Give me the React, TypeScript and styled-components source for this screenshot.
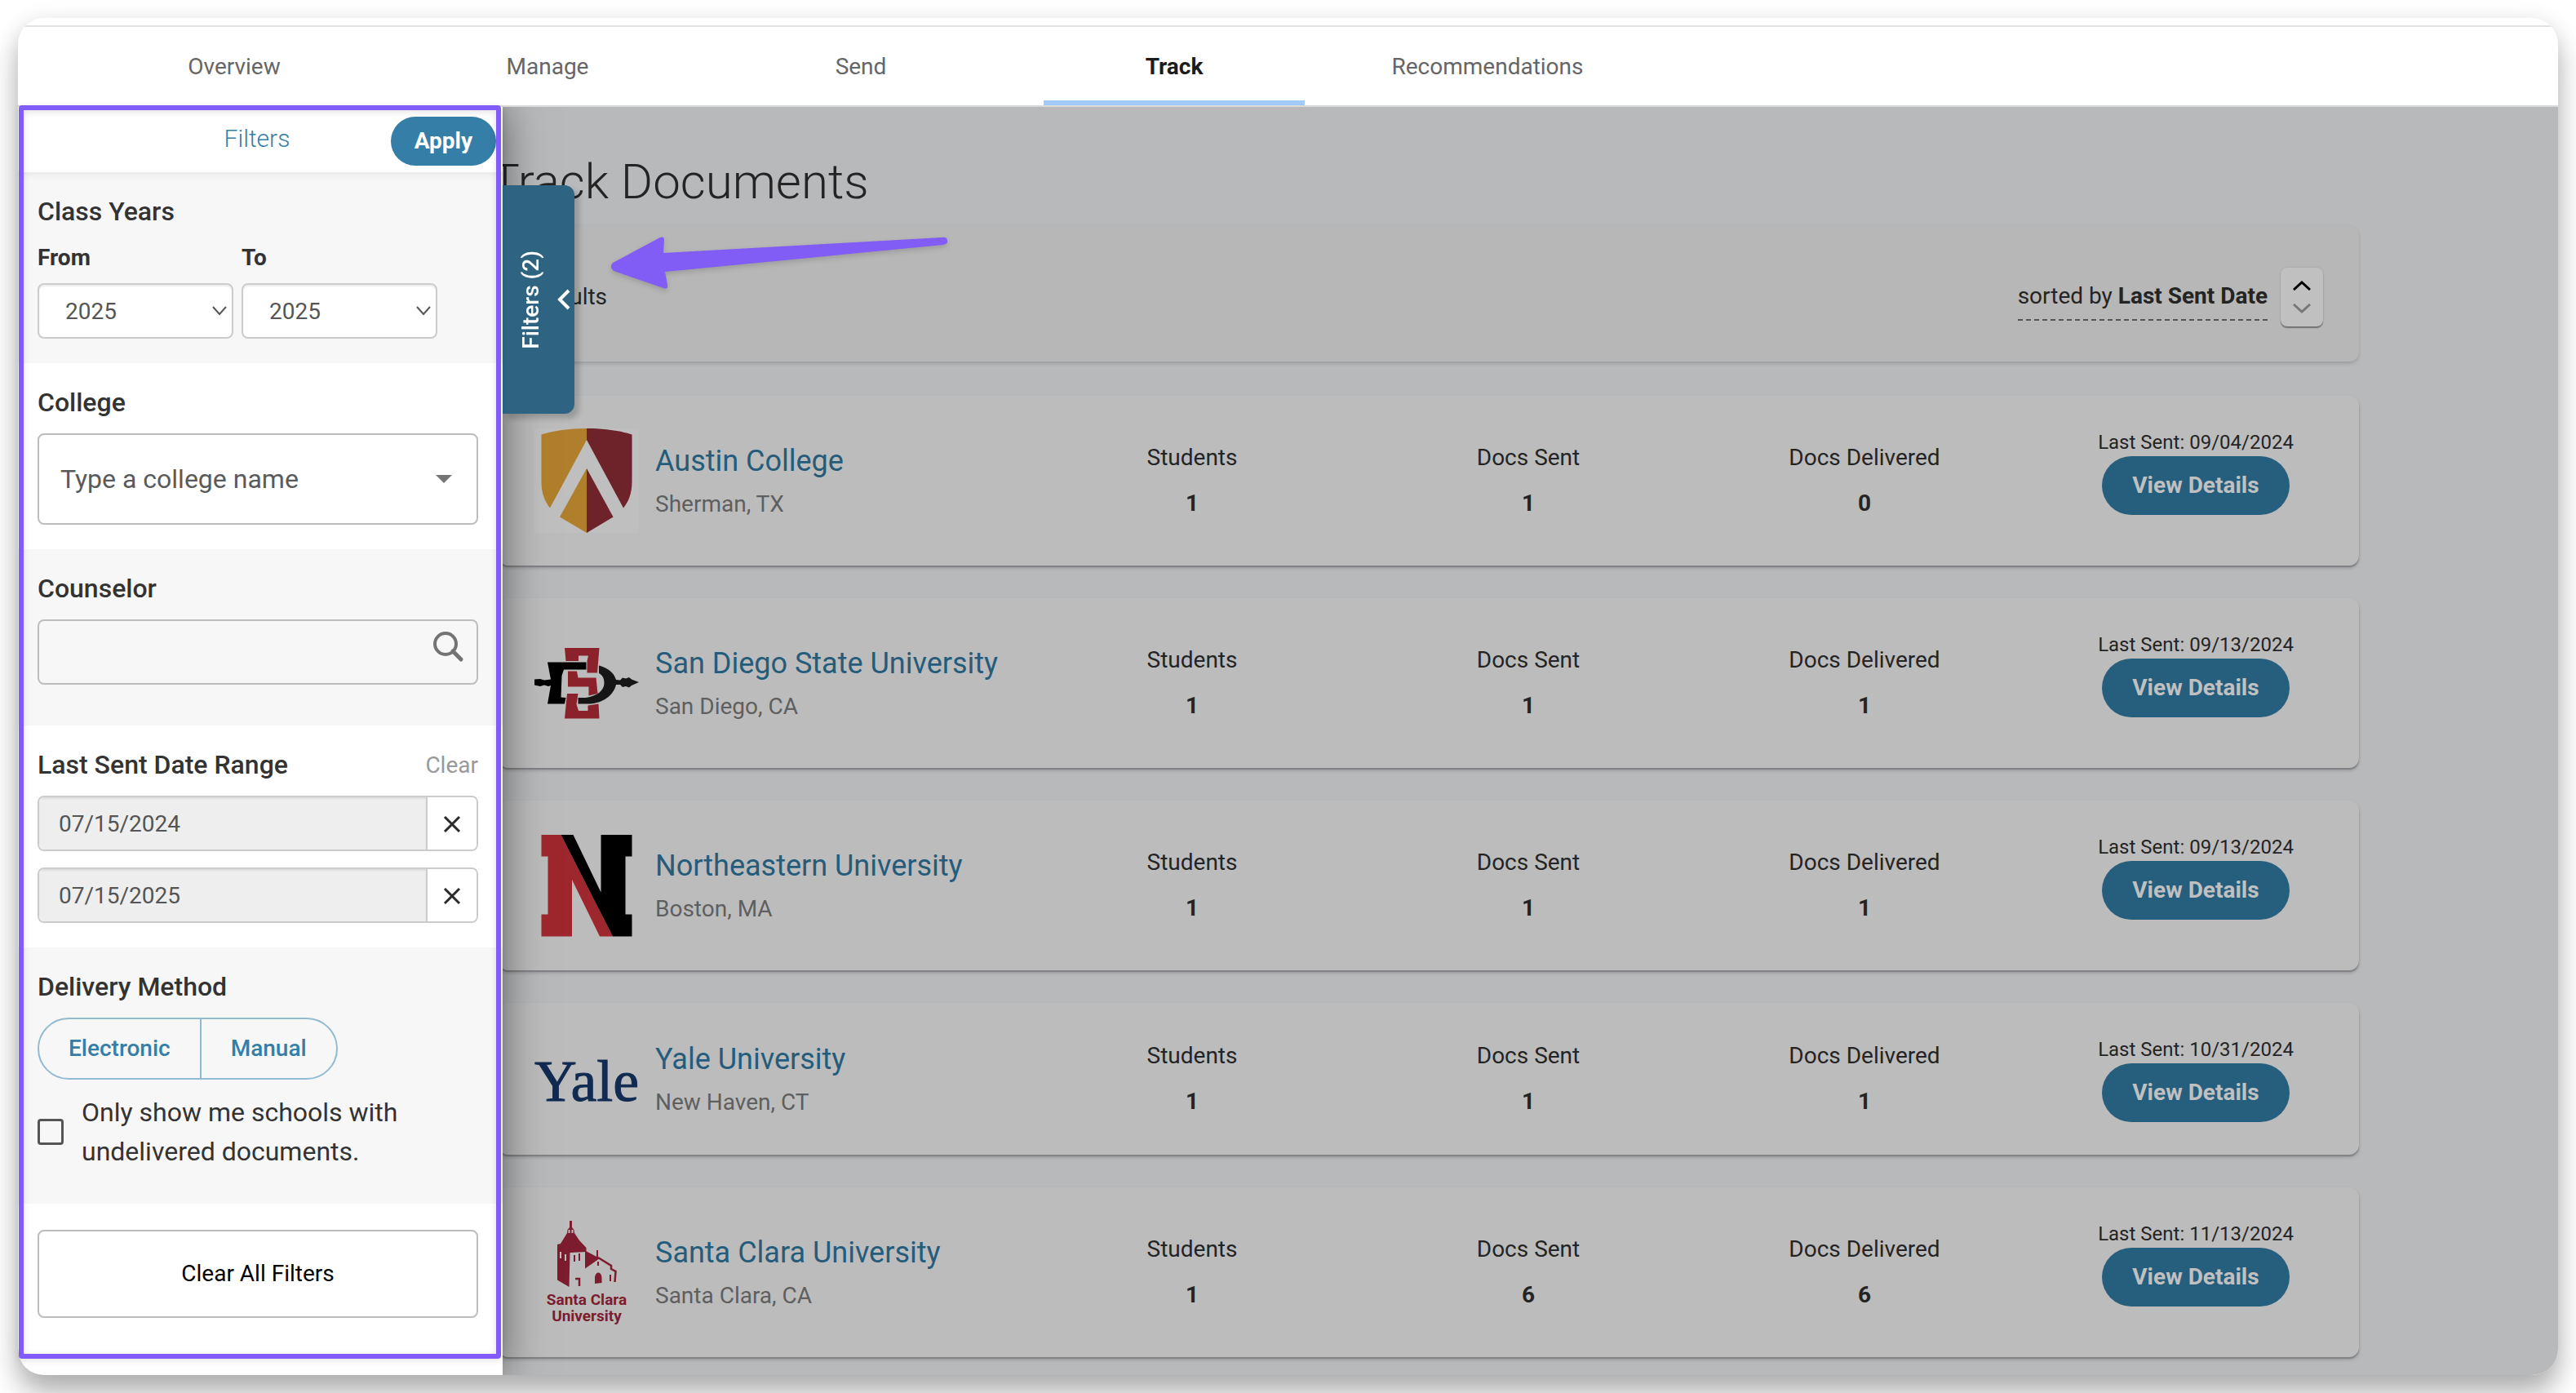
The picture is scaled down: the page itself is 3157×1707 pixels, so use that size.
import React, { useState } from "react";
import styled, { createGlobalStyle, css } from "styled-components";

const GlobalStyle = createGlobalStyle`
  *, *::before, *::after { box-sizing: border-box; }
  body {
    margin: 0;
    background: #ffffff;
    color: #242424;
    font-family: Roboto, "Liberation Sans", sans-serif;
    font-size: 28px;
    line-height: 32px;
  }
  button, input, select { font: inherit; margin: 0; }
  h1, h2, h3, p, dl, dd { margin: 0; font-weight: inherit; }
`;

/* ---------- page frame ---------- */

const Page = styled.div`
  position: relative;
  padding: 22px;
  overflow: hidden;
`;

const Frame = styled.div`
  border-radius: 32px;
  overflow: hidden;
  background: #ffffff;
  box-shadow: 0 22px 34px rgba(0, 0, 0, 0.3), 0 0 30px rgba(0, 0, 0, 0.06);
`;

const Nav = styled.nav`
  display: flex;
  margin-top: 9px;
  padding-left: 73px;
  border-top: 2px solid #e3e3e3;
  border-bottom: 2px solid #dadada;
`;

const NavLink = styled.a<{ $active?: boolean }>`
  flex: 0 1 320px;
  height: 96px;
  margin: 0 32px;
  display: flex;
  align-items: center;
  justify-content: center;
  padding-top: 8px;
  border-bottom: 6px solid ${(p) => (p.$active ? "#a2caf8" : "transparent")};
  color: ${(p) => (p.$active ? "#1c1c1c" : "#666666")};
  font-weight: ${(p) => (p.$active ? 700 : 400)};
  text-decoration: none;
`;

const Body = styled.div`
  position: relative;
  display: flex;
`;

/* ---------- results ---------- */

const Main = styled.main`
  flex: 1;
  min-width: 0;
  padding: 56px 244px 22px 589px;
  background: #b8b9bb;
`;

const Title = styled.h1`
  font-size: 60px;
  line-height: 72px;
  font-weight: 300;
  margin: 0 0 18px -10px;
  color: #242424;
`;

const ResultsBar = styled.div`
  display: flex;
  align-items: center;
  justify-content: space-between;
  padding: 51px 44px 43px 26px;
  margin-bottom: 42px;
  border-radius: 12px;
  background: #b7b7b7;
  box-shadow: 0 3px 4px rgba(0, 0, 0, 0.12), 0 0 4px rgba(0, 0, 0, 0.04);
`;

const SortGroup = styled.div`
  display: flex;
  align-items: center;
  gap: 16px;
`;

const SortLink = styled.a`
  color: inherit;
  line-height: 48px;
  padding: 4px 0;
  border-bottom: 2px dashed #555555;
  text-decoration: none;

  b {
    font-weight: 700;
  }
`;

const SortButton = styled.button`
  display: flex;
  flex-direction: column;
  align-items: center;
  justify-content: center;
  gap: 16px;
  width: 52px;
  height: 72px;
  padding: 0;
  border: 0;
  border-radius: 8px;
  background: #c0c0c0;
  box-shadow: 0 2px 1px rgba(0, 0, 0, 0.35), 0 0 3px rgba(0, 0, 0, 0.12);
`;

const CardList = styled.ul`
  display: flex;
  flex-direction: column;
  gap: 40px;
  margin: 0;
  padding: 0;
  list-style: none;
`;

const Card = styled.li`
  display: grid;
  grid-template-columns: 600fr 412fr 412fr 412fr 400fr;
  align-items: center;
  padding: 40px 0 40px 44px;
  border-radius: 12px;
  background: #bcbcbc;
  box-shadow: 0 2px 1px #808284, 0 3px 4px rgba(0, 0, 0, 0.2);
`;

const School = styled.div`
  display: flex;
  align-items: center;
  gap: 20px;
`;

const LogoBox = styled.svg`
  display: block;
  flex: none;
  width: 128px;
  overflow: visible;
`;

const SchoolName = styled.a`
  display: block;
  font-size: 36px;
  line-height: 58px;
  color: #265c7b;
  text-decoration: none;
`;

const SchoolPlace = styled.p`
  line-height: 48px;
  color: #5f5f5f;
`;

const Stat = styled.dl`
  display: flex;
  flex-direction: column;
  align-items: center;
  gap: 6px;
  line-height: 50px;

  dd {
    font-weight: 700;
  }
`;

const Actions = styled.div`
  align-self: start;
  display: flex;
  flex-direction: column;
  align-items: center;
`;

const LastSent = styled.p`
  font-size: 24px;
  line-height: 34px;
`;

const PillButton = styled.button<{ $dimmed?: boolean }>`
  border: 0;
  padding: 0 29px;
  border-radius: 36px;
  font-weight: 700;
  height: 60px;
  background: #357ea8;
  color: #ffffff;
  ${(p) =>
    p.$dimmed &&
    css`
      min-width: 230px;
      height: 72px;
      background: #265e7e;
      color: #c0c0c0;
    `}
`;

/* ---------- filter drawer ---------- */

const Drawer = styled.aside`
  position: absolute;
  top: 0;
  bottom: 0;
  left: 0;
  width: 594px;
  background: #ffffff;
  box-shadow: 0 0 50px rgba(0, 0, 0, 0.5);
  clip-path: inset(0 -100px 0 0);
`;

const DrawerHeader = styled.header`
  position: relative;
  display: grid;
  grid-template-columns: 1fr auto 1fr;
  align-items: center;
  height: 80px;
  padding: 4px 8px 0 0;
  box-shadow: 0 2px 10px rgba(0, 0, 0, 0.08);

  h2 {
    grid-column: 2;
    padding-bottom: 6px;
    font-size: 30px;
    font-weight: 300;
    color: #357ea8;
  }

  button {
    justify-self: end;
  }
`;

const Section = styled.section<{ $shaded?: boolean }>`
  padding: 28px 30px 30px 24px;
  background: ${(p) => (p.$shaded ? "#f7f7f7" : "#ffffff")};
`;

const CounselorSection = styled(Section)`
  padding-bottom: 50px;
`;

const DeliverySection = styled(Section)`
  padding-bottom: 40px;
`;

const FooterSection = styled(Section)`
  padding-top: 32px;
`;

const sectionTitle = css`
  display: block;
  margin-bottom: 18px;
  font-size: 32px;
  line-height: 40px;
  font-weight: 500;
  color: #333333;
`;

const SectionTitle = styled.h3`
  ${sectionTitle}
`;

const SectionLabel = styled.label`
  ${sectionTitle}
`;

const TitleRow = styled.div`
  display: flex;
  justify-content: space-between;
`;

const TextButton = styled.button`
  border: 0;
  padding: 0;
  background: none;
  line-height: 40px;
  height: 42px;
  color: #999999;
`;

const YearRow = styled.div`
  display: flex;
  gap: 10px;
`;

const YearField = styled.div`
  flex: 0 0 240px;

  label {
    display: block;
    line-height: 38px;
    margin-bottom: 12px;
    font-weight: 700;
    color: #333333;
  }
`;

const Control = styled.div`
  position: relative;
`;

const ControlIcon = styled.span<{ $right: number }>`
  position: absolute;
  top: 0;
  bottom: 0;
  right: ${(p) => p.$right}px;
  display: flex;
  align-items: center;
  pointer-events: none;
`;

const field = css`
  display: block;
  width: 100%;
  border: 2px solid #cccccc;
  border-radius: 8px;
  color: #555555;
  outline: 0;
`;

const YearSelect = styled.select`
  ${field}
  appearance: none;
  height: 68px;
  padding: 2px 32px 0;
  background: #ffffff;
  box-shadow: inset 0 2px 2px rgba(0, 0, 0, 0.08);
`;

const CollegeInput = styled.input`
  ${field}
  height: 112px;
  padding: 0 80px 0 26px;
  border-color: #bdbdbd;
  background: #ffffff;
  font-size: 32px;

  &::placeholder {
    color: #5a5a5a;
    opacity: 1;
  }
`;

const CounselorInput = styled.input`
  ${field}
  height: 80px;
  padding: 0 70px 0 26px;
  border-color: #bdbdbd;
  background: transparent;
`;

const SearchButton = styled.button`
  position: absolute;
  top: 12px;
  right: 14px;
  display: flex;
  padding: 0;
  border: 0;
  background: none;
`;

const DateStack = styled.div`
  display: flex;
  flex-direction: column;
  gap: 20px;
`;

const DateGroup = styled.div`
  display: flex;
  height: 68px;
  border: 2px solid #cccccc;
  border-radius: 8px;
  overflow: hidden;

  input {
    flex: 1;
    min-width: 0;
    border: 0;
    outline: 0;
    padding: 2px 24px 0;
    background: #eeeeee;
    color: #555555;
    box-shadow: inset 0 2px 2px rgba(0, 0, 0, 0.08);
  }

  button {
    display: flex;
    align-items: center;
    justify-content: center;
    width: 62px;
    border: 0;
    border-left: 2px solid #cccccc;
    padding: 2px 0 0;
    background: #ffffff;
  }
`;

const Segmented = styled.div`
  display: inline-flex;
  height: 76px;
  border: 2px solid #92bbd3;
  border-radius: 38px;
  overflow: hidden;

  button {
    border: 0;
    padding: 0 36px;
    background: transparent;
    color: #357ea8;
    font-weight: 500;
  }

  button + button {
    border-left: 2px solid #92bbd3;
  }
`;

const CheckRow = styled.label`
  display: flex;
  align-items: center;
  gap: 22px;
  margin-top: 16px;
  font-size: 32px;
  line-height: 48px;
  color: #333333;
`;

const Checkbox = styled.input`
  appearance: none;
  flex: none;
  width: 32px;
  height: 32px;
  border: 3px solid #555555;
  border-radius: 4px;

  &:checked {
    background: #357ea8;
  }
`;

const ClearAll = styled.button`
  ${field}
  height: 108px;
  border-color: #bdbdbd;
  background: #ffffff;
  color: #000000;
`;

const DrawerTab = styled.button`
  position: absolute;
  top: 96px;
  left: 594px;
  display: flex;
  align-items: center;
  justify-content: space-between;
  width: 88px;
  height: 280px;
  padding: 0 5px 0 19px;
  border: 0;
  border-radius: 0 12px 12px 0;
  background: #2e6482;
  color: #ffffff;
  font-weight: 500;
  box-shadow: 6px 6px 6px rgba(0, 0, 0, 0.18);

  span {
    writing-mode: vertical-rl;
    transform: rotate(180deg);
  }
`;

/* ---------- annotations drawn over the page ---------- */

const Highlight = styled.div`
  position: absolute;
  top: 129px;
  left: 23px;
  bottom: 42px;
  width: 591px;
  border: 6px solid #815cf8;
  border-radius: 4px;
  box-shadow: 0 2px 8px rgba(0, 0, 0, 0.12), inset 0 2px 8px rgba(0, 0, 0, 0.12);
  pointer-events: none;
`;

const Arrow = styled.svg`
  position: absolute;
  top: 280px;
  left: 740px;
  pointer-events: none;
  filter: drop-shadow(0 3px 3px rgba(0, 0, 0, 0.15));
`;

/* ---------- icons and logos ---------- */

type StrokeProps = {
  d: string;
  width: number;
  height: number;
  color: string;
  weight?: number;
};

const Stroke = ({ d, width, height, color, weight = 3 }: StrokeProps) => (
  <svg width={width} height={height} viewBox={`0 0 ${width} ${height}`} fill="none" aria-hidden="true">
    <path d={d} stroke={color} strokeWidth={weight} />
  </svg>
);

const CrossIcon = () => (
  <Stroke d="M2 2 L20 20 M20 2 L2 20" width={22} height={22} color="#2a2a2a" />
);

const SearchIcon = () => (
  <svg width="44" height="44" viewBox="0 0 44 44" fill="none" stroke="#737373" aria-hidden="true">
    <circle cx="18" cy="18" r="13" strokeWidth="4" />
    <path d="M27 27 L37 37" strokeWidth="5" strokeLinecap="round" />
  </svg>
);

const AustinLogo = () => (
  <LogoBox viewBox="0 0 128 128" aria-hidden="true">
    <rect width="128" height="128" fill="#bfbfbf" />
    <path d="M64 0 C42 0 22 3 8.5 7.5 V65 C8.5 80 13 90 19 97.500 L64 14 Z" fill="#b07f2b" />
    <path d="M64 0 C86 0 106 3 119.500 7.500 V65 C119.500 80 115 90 109 97.500 L64 14 Z" fill="#6e222a" />
    <path d="M64 49 L31 108.500 L64 128 Z" fill="#b07f2b" />
    <path d="M64 49 L96.500 108.500 L64 128 Z" fill="#6e222a" />
  </LogoBox>
);

const SanDiegoLogo = () => (
  <LogoBox viewBox="0 0 128 87" aria-hidden="true">
    <g fill="#8b212b">
      <path d="M37 0 H79.500 L77 30.500 H64.500 V16 L66 9.500 H54 V16 H38.500 Z" />
      <path d="M41 28.500 H52 L53.500 36.500 H75.500 L77.500 56 L66.500 58.500 V47.500 H41 Z" />
      <path d="M40 56 H53.500 L51.500 69 L54 77 H65.500 V70.500 L78.500 68.500 L79.500 86.500 H37 Z" />
    </g>
    <path d="M16 17.500 H63.500 V26.500 H36 L33.500 34 L32.500 60.500 L38.500 61 L37 68.500 H16 L20 46 L17 47 L12 45.500 L7 47 L0 45.500 V38.500 L7 38 L12 39.500 L20 38.500 Z" fill="#000000" />
    <path d="M79 21.500 C92 25 98 32 100 39 L105 39.500 L108 36.500 L112 37.500 L116 36 L119 38.500 L128 42 L119 46 L116 48.500 L112 47 L108 48 L105 45 L100 45 C97 58 84 67.500 68 68.500 H53.500 V61 H63 C77 59 85.500 52 85.500 43 C85.500 37 83 33 79 31 Z" fill="#161616" />
  </LogoBox>
);

const NortheasternLogo = () => (
  <LogoBox viewBox="0 0 128 128" aria-hidden="true">
    <path d="M8.500 2 H32.500 L96 126.500 H80 L46 57 V126.500 H8.500 V99.500 H16.500 V28.500 H8.500 Z" fill="#9e272e" />
    <path d="M32.500 2 H47.500 L81.500 72.500 V2 H119.500 V28.500 H111.500 V99.500 H119.500 V126.500 H96 Z" fill="#000000" />
  </LogoBox>
);

const YaleLogo = () => (
  <LogoBox viewBox="-2 -10 132 76" aria-hidden="true">
    <text
      x="64"
      y="56"
      textAnchor="middle"
      fontFamily="'Liberation Serif', serif"
      fontSize="74"
      fill="#102a52"
      stroke="#102a52"
      strokeWidth="1"
    >
      Yale
    </text>
  </LogoBox>
);

const SantaClaraLogo = () => (
  <LogoBox viewBox="0 0 128 128" aria-hidden="true" fill="#7c1c2e">
    <path d="M43 1 H46 V9 L48.500 12 L49 16 L55 25 L63.500 34 V39 L43.500 40 L42.500 82 L28 73.500 V30 L32 29 L40 16 L40.500 12 L43 9 Z" />
    <path d="M42.500 12 V16 M46.500 12 V16 M32 39 V47 M38 42 V50" stroke="#bcbcbc" strokeWidth="2" />
    <path d="M49 43 V51 M55 41 V50 M93 67 V75 M78 51 V56 M77 37 V46" stroke="#7c1c2e" strokeWidth="2" />
    <path d="M62 37.500 L80 47 L62 59.500 Z" />
    <path d="M78 46 L94 56 V60 L99.500 63 L98.500 76 M50 72 H55 V81" fill="none" stroke="#7c1c2e" strokeWidth="2.500" />
    <path d="M74 78 V70 Q75 64 79 64.500 Q82.500 66 82.500 71 V77 Z" />
    <g fontFamily="Roboto, sans-serif" fontWeight="700" fontSize="19" textAnchor="middle">
      <text x="64" y="104">Santa Clara</text>
      <text x="64" y="124">University</text>
    </g>
  </LogoBox>
);

/* ---------- data ---------- */

const TABS = ["Overview", "Manage", "Send", "Track", "Recommendations"];

const SCHOOLS = [
  { name: "Austin College", place: "Sherman, TX", stats: [1, 1, 0], sent: "09/04/2024", Logo: AustinLogo },
  { name: "San Diego State University", place: "San Diego, CA", stats: [1, 1, 1], sent: "09/13/2024", Logo: SanDiegoLogo, tall: true },
  { name: "Northeastern University", place: "Boston, MA", stats: [1, 1, 1], sent: "09/13/2024", Logo: NortheasternLogo },
  { name: "Yale University", place: "New Haven, CT", stats: [1, 1, 1], sent: "10/31/2024", Logo: YaleLogo },
  { name: "Santa Clara University", place: "Santa Clara, CA", stats: [1, 6, 6], sent: "11/13/2024", Logo: SantaClaraLogo },
];

const STAT_LABELS = ["Students", "Docs Sent", "Docs Delivered"];

const LogoSlot = styled.div<{ $tall?: boolean }>`
  display: flex;
  align-items: center;
  min-height: ${(p) => (p.$tall ? 128 : 0)}px;
`;

const YearPicker = ({ id, label }: { id: string; label: string }) => (
  <YearField>
    <label htmlFor={id}>{label}</label>
    <Control>
      <YearSelect id={id} defaultValue="2025">
        <option>2024</option>
        <option>2025</option>
        <option>2026</option>
      </YearSelect>
      <ControlIcon $right={8}>
        <Stroke d="M1 1 L9 10 L17 1" width={18} height={12} color="#555555" weight={2} />
      </ControlIcon>
    </Control>
  </YearField>
);

export default function App() {
  const [dates, setDates] = useState(["07/15/2024", "07/15/2025"]);
  const clearDate = (index: number) =>
    setDates(dates.map((date, i) => (i === index ? "" : date)));

  return (
    <Page>
      <GlobalStyle />
      <Frame>
        <Nav>
          {TABS.map((tab) => (
            <NavLink key={tab} href="#" $active={tab === "Track"}>
              {tab}
            </NavLink>
          ))}
        </Nav>
        <Body>
          <Main>
            <Title>Track Documents</Title>
            <ResultsBar>
              <span>5 results</span>
              <SortGroup>
                <SortLink href="#">
                  sorted by <b>Last Sent Date</b>
                </SortLink>
                <SortButton aria-label="Change sort direction">
                  <Stroke d="M1 11 L11 2 L21 11" width={22} height={12} color="#000000" />
                  <Stroke d="M1 1 L11 10 L21 1" width={22} height={12} color="#777777" />
                </SortButton>
              </SortGroup>
            </ResultsBar>
            <CardList>
              {SCHOOLS.map(({ name, place, stats, sent, Logo, tall }) => (
                <Card key={name}>
                  <School>
                    <LogoSlot $tall={tall}>
                      <Logo />
                    </LogoSlot>
                    <div>
                      <SchoolName href="#">{name}</SchoolName>
                      <SchoolPlace>{place}</SchoolPlace>
                    </div>
                  </School>
                  {STAT_LABELS.map((label, i) => (
                    <Stat key={label}>
                      <dt>{label}</dt>
                      <dd>{stats[i]}</dd>
                    </Stat>
                  ))}
                  <Actions>
                    <LastSent>Last Sent: {sent}</LastSent>
                    <PillButton $dimmed>View Details</PillButton>
                  </Actions>
                </Card>
              ))}
            </CardList>
          </Main>

          <Drawer aria-label="Filters">
            <DrawerHeader>
              <h2>Filters</h2>
              <PillButton>Apply</PillButton>
            </DrawerHeader>
            <Section $shaded>
              <SectionTitle>Class Years</SectionTitle>
              <YearRow>
                <YearPicker id="year-from" label="From" />
                <YearPicker id="year-to" label="To" />
              </YearRow>
            </Section>
            <Section>
              <SectionLabel htmlFor="college">College</SectionLabel>
              <Control>
                <CollegeInput id="college" placeholder="Type a college name" />
                <ControlIcon $right={32}>
                  <svg width="20" height="10" viewBox="0 0 20 10" aria-hidden="true">
                    <path d="M0 0 H20 L10 10 Z" fill="#757575" />
                  </svg>
                </ControlIcon>
              </Control>
            </Section>
            <CounselorSection $shaded>
              <SectionLabel htmlFor="counselor">Counselor</SectionLabel>
              <Control>
                <CounselorInput id="counselor" />
                <SearchButton aria-label="Search counselors">
                  <SearchIcon />
                </SearchButton>
              </Control>
            </CounselorSection>
            <Section>
              <TitleRow>
                <SectionTitle>Last Sent Date Range</SectionTitle>
                <TextButton onClick={() => setDates(["", ""])}>Clear</TextButton>
              </TitleRow>
              <DateStack>
                {dates.map((date, i) => (
                  <DateGroup key={i}>
                    <input aria-label={i ? "End date" : "Start date"} value={date} readOnly />
                    <button aria-label="Clear date" onClick={() => clearDate(i)}>
                      <CrossIcon />
                    </button>
                  </DateGroup>
                ))}
              </DateStack>
            </Section>
            <DeliverySection $shaded>
              <SectionTitle>Delivery Method</SectionTitle>
              <Segmented>
                <button>Electronic</button>
                <button>Manual</button>
              </Segmented>
              <CheckRow>
                <Checkbox type="checkbox" />
                <span>Only show me schools with undelivered documents.</span>
              </CheckRow>
            </DeliverySection>
            <FooterSection>
              <ClearAll>Clear All Filters</ClearAll>
            </FooterSection>
          </Drawer>

          <DrawerTab>
            <span>Filters (2)</span>
            <Stroke d="M14 2 L3 13 L14 24" width={16} height={26} color="#ffffff" weight={4} />
          </DrawerTab>
        </Body>
      </Frame>

      <Highlight />
      <Arrow width="440" height="90" viewBox="0 0 440 90" aria-hidden="true">
        <path
          d="M11 42 L69 11 Q74 9 74 14 L73 30 L414 11 Q421 10 421 15 Q422 19 416 20 L75 53 L78 69 Q79 75 73 73 L12 52 Q6 47 11 42 Z"
          fill="#815cf5"
        />
      </Arrow>
    </Page>
  );
}
